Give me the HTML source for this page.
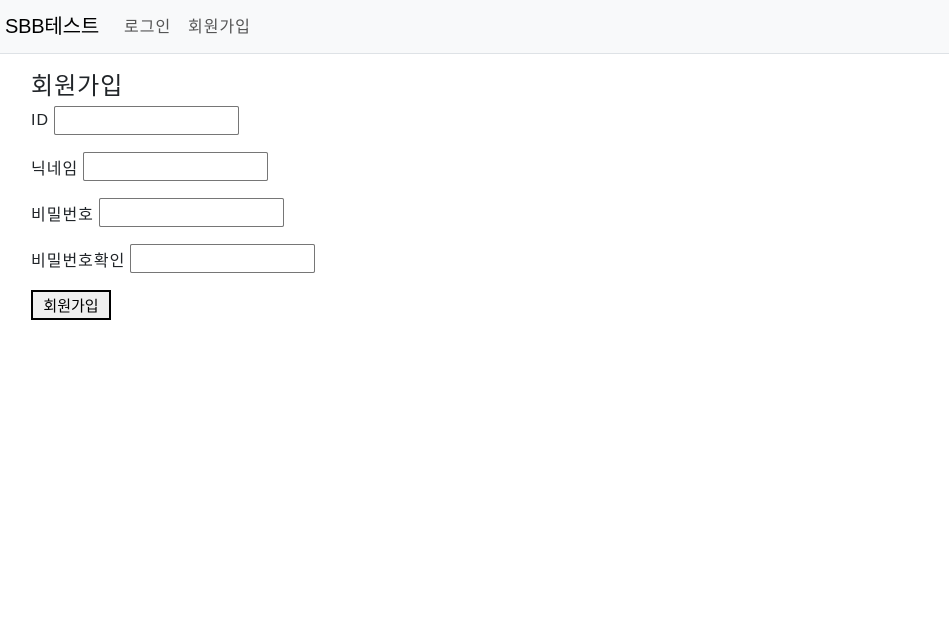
<!DOCTYPE html>
<html><head><meta charset="utf-8"><style>
*{box-sizing:border-box}
body{margin:0;width:949px;height:639px;background:#fff;font-family:"Liberation Sans","Noto Sans CJK KR",sans-serif;color:#212529;font-size:16px;overflow:hidden}
nav{height:54px;background:#f8f9fa;border-bottom:1px solid #dee2e6;position:relative}
.brand{position:absolute;left:5px;top:10px;font-size:20px;color:#000;letter-spacing:-0.2px}
.l{position:absolute;top:13px;font-size:16px;color:#555;letter-spacing:1px}
h3{position:absolute;left:31px;top:66px;margin:0;font-size:24px;font-weight:400;color:#212529;letter-spacing:1px}
.row{position:absolute;left:31px;font-size:16px;display:flex;align-items:center;letter-spacing:1px}
.row input{margin-left:5px;width:185px;height:29px;border:1px solid #767676;border-radius:2px}
button{position:absolute;left:31px;top:290px;width:80px;height:30px;font-size:15px;border:2px solid #000;background:#efefef;font-family:"Liberation Sans","Noto Sans CJK KR",sans-serif;padding:0}
</style></head><body>
<nav><span class="brand">SBB테스트</span><span class="l" style="left:124px">로그인</span><span class="l" style="left:188px">회원가입</span></nav>
<h3>회원가입</h3>
<div class="row" style="top:106px">ID<input></div>
<div class="row" style="top:152px">닉네임<input></div>
<div class="row" style="top:198px">비밀번호<input></div>
<div class="row" style="top:244px">비밀번호확인<input></div>
<button>회원가입</button>
</body></html>
